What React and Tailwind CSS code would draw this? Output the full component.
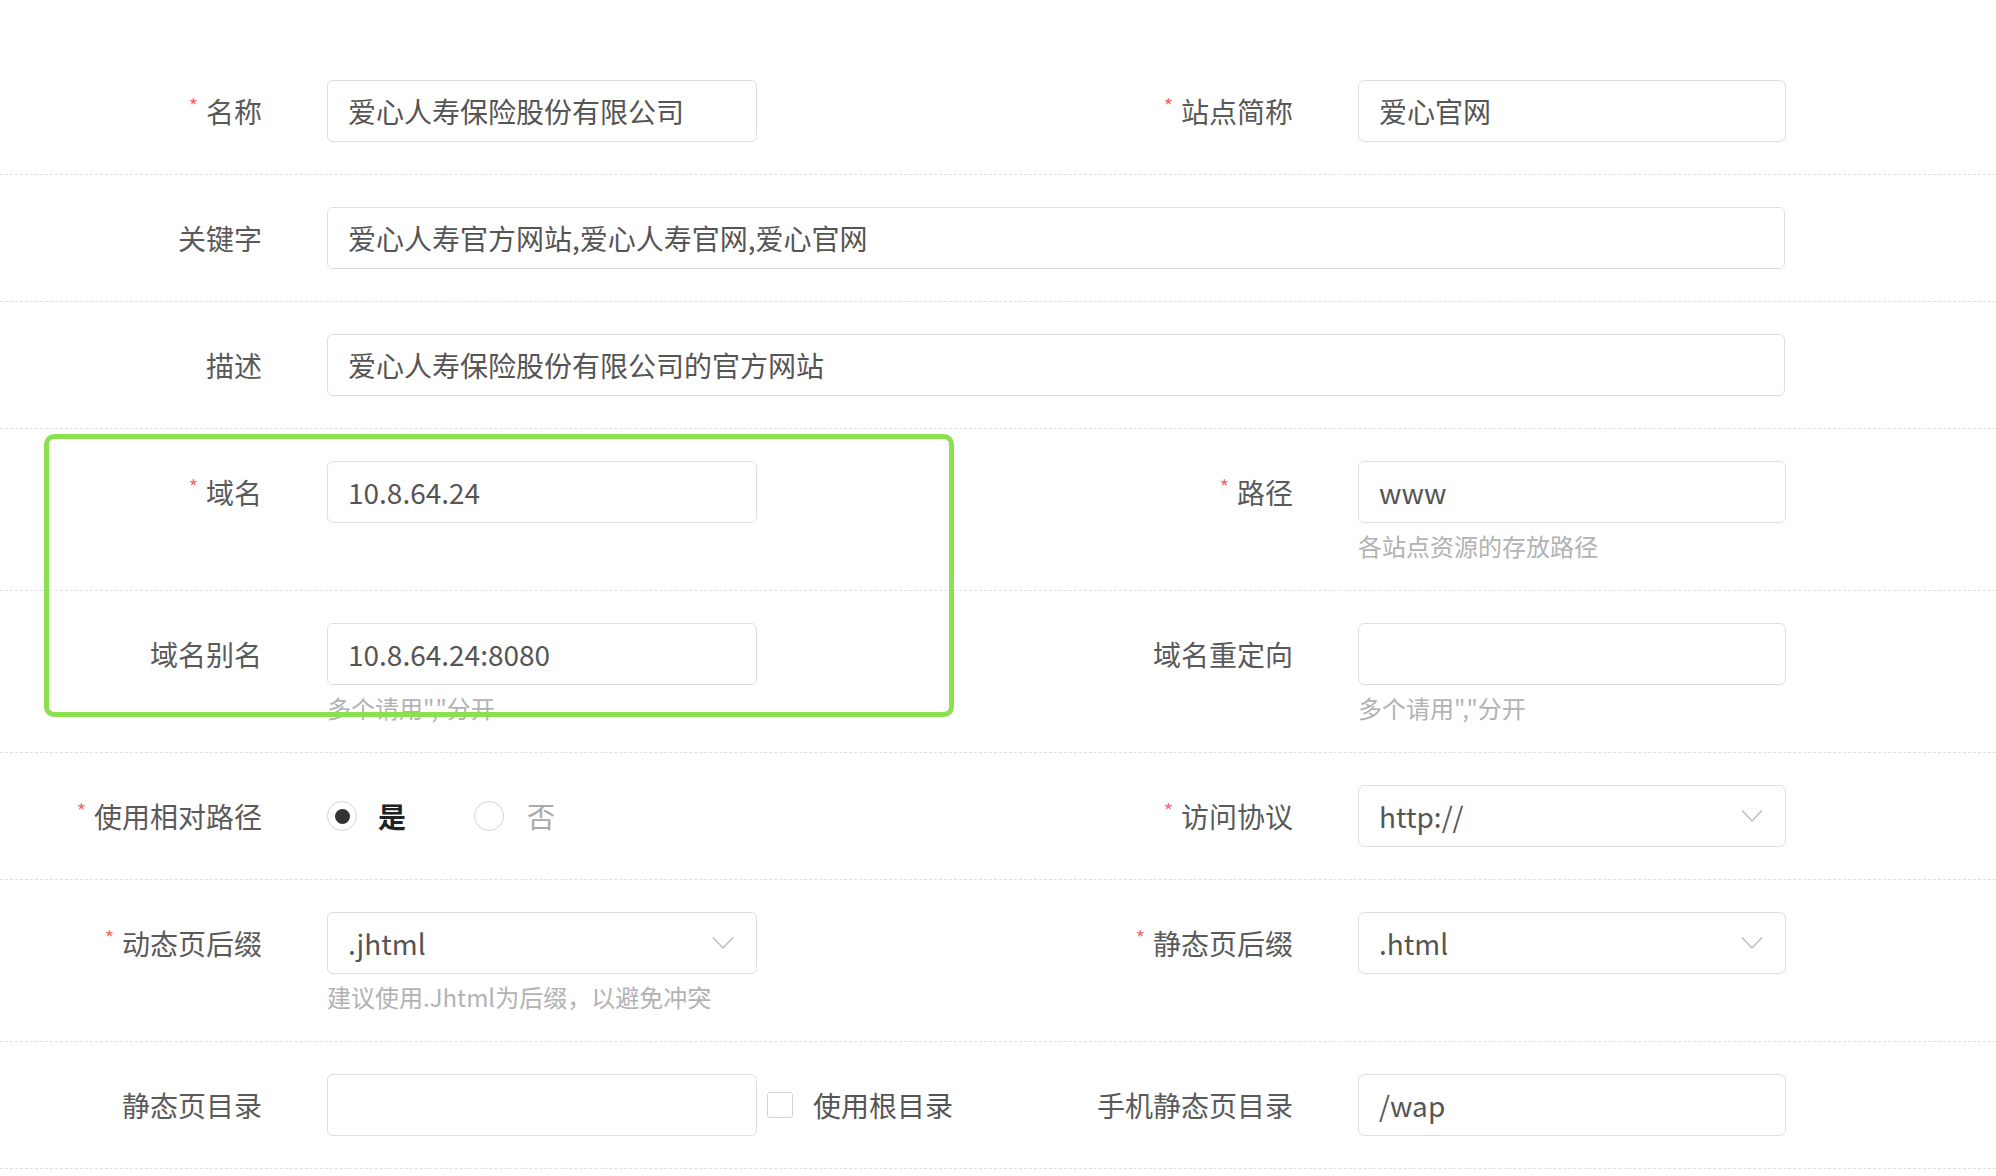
import React from "react";

const FONT = { fontFamily: '"Noto Sans CJK SC", "Microsoft YaHei", "Noto Sans", sans-serif' };

function Label({ text, required }) {
  return (
    <div className="w-[262px] shrink-0 flex items-center justify-end h-[62px] text-[28px] leading-none text-[#5a5a5a]">
      {required && <span className="text-[#f56c6c] text-[20px] self-start mt-[16px] mr-[8px]">*</span>}
      <span>{text}</span>
    </div>
  );
}

function Input({ value, w = "w-[430px]", select }) {
  return (
    <div className={`${w} h-[62px] border border-[#dcdde6] rounded-[6px] bg-white flex items-center pl-[20px] pr-[22px] text-[28px] leading-none text-[#555]`}>
      <span className="flex-1">{value}</span>
      {select && (
        <svg width="22" height="14" viewBox="0 0 22 14" fill="none">
          <path d="M1 1.5 L11 12 L21 1.5" stroke="#bdbdc4" strokeWidth="1.5" />
        </svg>
      )}
    </div>
  );
}

function Help({ text }) {
  return <div className="h-[35px] pt-[11px] text-[24px] leading-[24px] text-[#b2b2b2]">{text}</div>;
}

function Field({ label, required, children }) {
  return (
    <div className="flex items-start">
      <Label text={label} required={required} />
      <div className="ml-[65px]">{children}</div>
    </div>
  );
}

function Row({ children }) {
  return <div className="border-b border-dashed border-[#e0e0e4] py-[32px]">{children}</div>;
}

function Half({ left, right }) {
  return (
    <div className="grid grid-cols-[1031px_1fr]">
      <div>{left}</div>
      <div>{right}</div>
    </div>
  );
}

export default function App() {
  return (
    <div className="relative w-[1996px] h-[1176px] bg-white overflow-hidden pt-[48px]" style={FONT}>
      <Row>
        <Half
          left={<Field label="名称" required><Input value="爱心人寿保险股份有限公司" /></Field>}
          right={<Field label="站点简称" required><Input value="爱心官网" w="w-[428px]" /></Field>}
        />
      </Row>
      <Row>
        <Field label="关键字"><Input value="爱心人寿官方网站,爱心人寿官网,爱心官网" w="w-[1458px]" /></Field>
      </Row>
      <Row>
        <Field label="描述"><Input value="爱心人寿保险股份有限公司的官方网站" w="w-[1458px]" /></Field>
      </Row>
      <Row>
        <Half
          left={<Field label="域名" required><Input value="10.8.64.24" /><Help text="" /></Field>}
          right={
            <Field label="路径" required>
              <Input value="www" w="w-[428px]" />
              <Help text="各站点资源的存放路径" />
            </Field>
          }
        />
      </Row>
      <Row>
        <Half
          left={
            <Field label="域名别名">
              <Input value="10.8.64.24:8080" />
              <Help text={'多个请用","分开'} />
            </Field>
          }
          right={
            <Field label="域名重定向">
              <Input value="" w="w-[428px]" />
              <Help text={'多个请用","分开'} />
            </Field>
          }
        />
      </Row>
      <Row>
        <Half
          left={
            <Field label="使用相对路径" required>
              <div className="h-[62px] flex items-center text-[28px] leading-none">
                <span className="w-[30px] h-[30px] rounded-full border border-[#d4d4d8] flex items-center justify-center">
                  <span className="w-[15px] h-[15px] rounded-full bg-[#333]" />
                </span>
                <span className="ml-[21px] font-bold text-[#222]">是</span>
                <span className="ml-[68px] w-[30px] h-[30px] rounded-full border border-[#d4d4d8]" />
                <span className="ml-[23px] text-[#aaa]">否</span>
              </div>
            </Field>
          }
          right={<Field label="访问协议" required><Input value="http://" w="w-[428px]" select /></Field>}
        />
      </Row>
      <Row>
        <Half
          left={
            <Field label="动态页后缀" required>
              <Input value=".jhtml" select />
              <Help text="建议使用.Jhtml为后缀，以避免冲突" />
            </Field>
          }
          right={<Field label="静态页后缀" required><Input value=".html" w="w-[428px]" select /></Field>}
        />
      </Row>
      <Row>
        <Half
          left={
            <div className="flex items-start">
              <Label text="静态页目录" />
              <div className="ml-[65px] flex items-center">
                <Input value="" />
                <span className="ml-[10px] w-[26px] h-[26px] rounded-[3px] border border-[#d4d4d8] bg-white" />
                <span className="ml-[20px] text-[28px] leading-none text-[#555]">使用根目录</span>
              </div>
            </div>
          }
          right={<Field label="手机静态页目录"><Input value="/wap" w="w-[428px]" /></Field>}
        />
      </Row>

      <div className="absolute left-[44px] top-[434px] w-[910px] h-[283px] border-[5px] border-[#8ae04e] rounded-[10px] pointer-events-none" />
    </div>
  );
}
